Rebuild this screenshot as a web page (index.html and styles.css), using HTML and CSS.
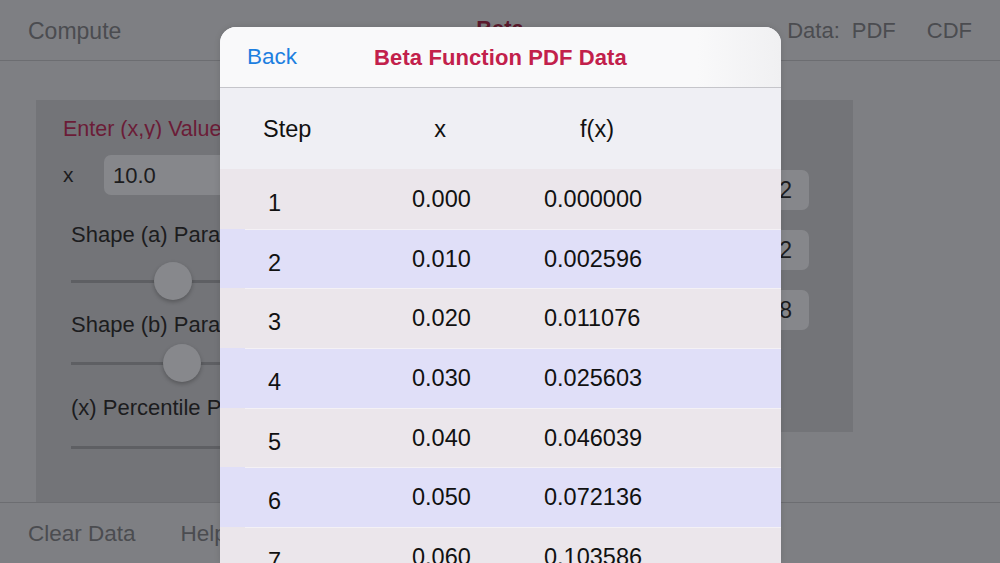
FILE: index.html
```html
<!DOCTYPE html>
<html>
<head>
<meta charset="utf-8">
<link rel="stylesheet" href="styles.css">
</head>
<body>
<div class="app">
  <header class="topbar">
    <span class="tb-left">Compute</span>
    <span class="tb-title">Beta</span>
    <span class="tb-right"><span>Data:</span><span>PDF</span><span class="cdf">CDF</span></span>
  </header>
  <main class="main">
    <section class="panel-left">
      <div class="enter">Enter (x,y) Values</div>
      <div class="xrow"><span class="xlab">x</span><span class="xinput">10.0</span></div>
      <div class="plabel pl1">Shape (a) Parameter</div>
      <div class="slider s1"><span class="thumb t1"></span></div>
      <div class="plabel pl2">Shape (b) Parameter</div>
      <div class="slider s2"><span class="thumb t2"></span></div>
      <div class="plabel pl3">(x) Percentile Point</div>
      <div class="slider s3"></div>
    </section>
    <section class="panel-right">
      <div class="rinput">2</div>
      <div class="rinput">2</div>
      <div class="rinput">8</div>
    </section>
  </main>
  <footer class="bottombar">
    <span>Clear Data</span>
    <span>Help</span>
  </footer>

  <div class="modal">
    <div class="m-head">
      <span class="back">Back</span>
      <span class="m-title">Beta Function PDF Data</span>
    </div>
    <div class="t-head">
      <span class="h-step">Step</span>
      <span class="h-x">x</span>
      <span class="h-f">f(x)</span>
    </div>
    <div class="rows">
      <div class="row odd"><span class="c-step">1</span><span class="c-x">0.000</span><span class="c-f">0.000000</span></div>
      <div class="row even"><span class="c-step">2</span><span class="c-x">0.010</span><span class="c-f">0.002596</span></div>
      <div class="row odd"><span class="c-step">3</span><span class="c-x">0.020</span><span class="c-f">0.011076</span></div>
      <div class="row even"><span class="c-step">4</span><span class="c-x">0.030</span><span class="c-f">0.025603</span></div>
      <div class="row odd"><span class="c-step">5</span><span class="c-x">0.040</span><span class="c-f">0.046039</span></div>
      <div class="row even"><span class="c-step">6</span><span class="c-x">0.050</span><span class="c-f">0.072136</span></div>
      <div class="row odd"><span class="c-step">7</span><span class="c-x">0.060</span><span class="c-f">0.103586</span></div>
    </div>
  </div>
</div>
</body>
</html>
```

FILE: styles.css
```css
* { box-sizing: border-box; }
html, body { margin: 0; padding: 0; }
body {
  width: 1000px;
  height: 563px;
  overflow: hidden;
  font-family: "Liberation Sans", Arial, sans-serif;
  background: #7e7f83;
}
.app {
  position: relative;
  width: 1000px;
  height: 563px;
  overflow: hidden;
  display: flex;
  flex-direction: column;
  background: #7e7f83;
}
.topbar {
  height: 61px;
  flex: none;
  border-bottom: 1px solid #6c6d71;
  display: flex;
  align-items: center;
  padding: 2px 28px 0 28px;
  font-size: 23px;
  color: #4b4c50;
  position: relative;
}
.tb-left { flex: 1; }
.tb-title {
  position: absolute;
  left: 0; right: 0;
  text-align: center;
  top: 16px;
  font-weight: bold;
  font-size: 22px;
  color: #5b1a2d;
}
.tb-right { display: flex; gap: 12px; font-size: 22px; }
.tb-right .cdf { margin-left: 19px; }

.main {
  flex: 1;
  display: flex;
  align-items: flex-start;
  padding: 39px 0 0 36px;
}
.panel-left {
  width: 464px;
  height: 402px;
  background: #737478;
  padding: 17px 0 0 27px;
  color: #1c1c1e;
  font-size: 22px;
}
.enter {
  color: #6b1c37;
  font-size: 21.5px;
  height: 22px;
  width: 157px;
  white-space: nowrap;
  overflow: hidden;
}
.xrow {
  display: flex;
  align-items: center;
  margin-top: 16px;
  height: 40px;
}
.xlab { width: 41px; font-size: 21px; }
.xinput {
  flex: 1;
  height: 40px;
  background: #86878b;
  border-radius: 7px 0 0 7px;
  padding: 8px 0 0 9px;
  font-size: 22px;
}
.plabel {
  margin-left: 8px;
  height: 26px;
  width: 149px;
  white-space: nowrap;
  overflow: hidden;
}
.pl1 { margin-top: 27px; }
.pl2 { margin-top: 29px; }
.pl3 { margin-top: 30px; }
.slider {
  position: relative;
  margin-left: 8px;
  height: 3px;
  background: #5e5f63;
}
.s1 { margin-top: 32px; }
.s2 { margin-top: 24px; }
.s3 { margin-top: 25px; }
.thumb {
  position: absolute;
  top: -18px;
  width: 38px;
  height: 38px;
  border-radius: 50%;
  background: #87888c;
  box-shadow: 0 2px 4px rgba(0,0,0,0.25);
}
.t1 { left: 83px; }
.t2 { left: 92px; }

.panel-right {
  width: 353px;
  height: 332px;
  background: #737478;
  padding: 70px 44px 0 0;
  display: flex;
  flex-direction: column;
  gap: 20px;
  align-items: flex-end;
}
.rinput {
  width: 300px;
  height: 40px;
  background: #86878b;
  border-radius: 7px;
  text-align: right;
  padding: 7px 17px 0 0;
  font-size: 23px;
  color: #1c1c1e;
}

.bottombar {
  height: 61px;
  flex: none;
  border-top: 1px solid #6c6d71;
  display: flex;
  align-items: center;
  gap: 45px;
  padding: 2px 0 0 28px;
  font-size: 22.5px;
  color: #4b4c50;
}

/* modal */
.modal {
  position: absolute;
  left: 220px;
  top: 27px;
  width: 561px;
  height: 536px;
  border-radius: 16px 16px 0 0;
  overflow: hidden;
  background: #efeff4;
  box-shadow: 0 0 6px rgba(0,0,0,0.12);
}
.m-head {
  height: 61px;
  background: linear-gradient(to right, #f9f9fa 0%, #f9f9fa 85%, #f0f0f2 100%);
  border-bottom: 1px solid #c5c5ca;
  display: flex;
  align-items: center;
  padding: 0 0 0 27px;
  position: relative;
  font-size: 22.5px;
}
.back { color: #1d7fe0; }
.m-title {
  position: absolute;
  left: 0; right: 0;
  text-align: center;
  color: #c2204b;
  font-weight: bold;
  font-size: 22px;
  top: 18px;
  letter-spacing: 0.1px;
}
.t-head {
  height: 81px;
  font-size: 23.5px;
  color: #111;
  display: flex;
  align-items: center;
  padding: 1px 0 0 43px;
}
.h-step { width: 127px; }
.h-x { width: 100px; text-align: center; }
.h-f { width: 214px; text-align: center; }
.rows { display: flex; flex-direction: column; }
.row {
  height: 59.7px;
  flex: none;
  display: flex;
  font-size: 23.5px;
  color: #111;
  position: relative;
  border-top: 1px solid transparent;
}
.row + .row::before {
  content: "";
  position: absolute;
  left: 25px; right: 0;
  top: -1px;
  height: 1px;
  background: #f4f1f5;
}
.odd { background: #ebe6eb; }
.even { background: #e0dff8; }
.c-step { width: 192px; padding: 20px 0 0 48px; }
.c-x { width: 132px; padding-top: 16px; }
.c-f { padding-top: 16px; }
```
